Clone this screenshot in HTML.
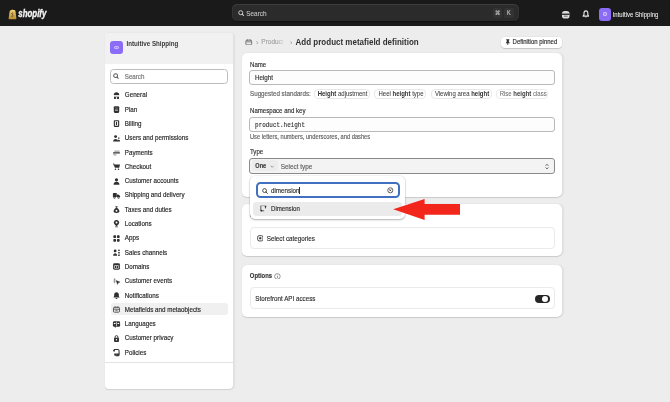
<!DOCTYPE html>
<html><head><meta charset="utf-8">
<style>
*{box-sizing:border-box;margin:0;padding:0}
html,body{width:670px;height:402px;overflow:hidden;background:#ededed;font-family:"Liberation Sans",sans-serif;color:#303030}
.t,.lbl,.chip{-webkit-text-stroke:0.14px currentColor}
.t,.lbl{transform:scaleY(1.14);transform-origin:0 50%}
.a{position:absolute}
.t{position:absolute;white-space:nowrap;line-height:1}
#top{position:absolute;left:0;top:0;width:670px;height:25.5px;background:#1a1a1a}
#side{position:absolute;left:104.8px;top:32.6px;width:128.6px;height:356.8px;background:#fff;border-radius:4px;box-shadow:0 0.5px 1px rgba(0,0,0,.12),1.2px 0 1.5px rgba(0,0,0,.05);overflow:hidden}
#sidehead{position:absolute;left:0;top:0;width:129px;height:31px;background:#f1f1f1}
.nav{position:absolute;left:20px;font-size:6.25px;color:#1f1f1f;line-height:1}
.ico{position:absolute;left:8.5px;width:6px;height:6px}
.card{position:absolute;left:241.8px;width:320.4px;background:#fff;border-radius:5px;box-shadow:0 0.6px 1px rgba(0,0,0,.14),1.5px 0 2px rgba(0,0,0,.05)}
.lbl{position:absolute;font-size:6.1px;line-height:1;color:#303030;white-space:nowrap}
.inp{position:absolute;left:7.6px;width:305.8px;height:14.6px;border:0.6px solid #b9b9b9;border-radius:3px;background:#fdfdfd}
.chip{position:absolute;top:36.8px;height:9.7px;border:0.6px solid #e8e8e8;border-radius:4px;background:#fff;font-size:6px;line-height:9.3px;padding-left:3px;white-space:nowrap;color:#404040;-webkit-text-stroke:0.05px currentColor}
.chip b{color:#303030;-webkit-text-stroke:0}
.ct{display:inline-block;transform:scaleY(1.14);transform-origin:0 50%}
.chip b{font-weight:700}
</style></head><body><div id="root" style="position:absolute;left:0;top:0;width:670px;height:402px;will-change:transform">

<!-- TOP BAR -->
<div id="top">
  <svg class="a" style="left:7.7px;top:8.5px" width="9" height="11" viewBox="0 0 9 11">
    <defs><linearGradient id="bg1" x1="0" y1="0" x2="0" y2="1"><stop offset="0" stop-color="#f0d27a"/><stop offset="1" stop-color="#b88a2e"/></linearGradient></defs>
    <path d="M1.6 2.6 Q2 1.2 3.2 1.1 Q4.2 0.2 5.2 1 L6.6 1.1 Q7.3 1.3 7.5 2.2 L8.4 9.4 Q8.4 10.2 7.6 10.2 L1.2 10.2 Q0.5 10.2 0.6 9.4 Z" fill="url(#bg1)"/>
    <path d="M5.3 4.2 Q4.5 3.7 3.8 4.2 Q3.3 4.9 4.3 5.5 Q5.4 6.1 4.9 7.1 Q4.3 7.8 3.3 7.2" fill="none" stroke="#5a4214" stroke-width="1" opacity=".8"/>
  </svg>
  <div class="t" style="left:18.3px;top:9.2px;font-size:7.9px;font-weight:700;font-style:italic;color:#f2f2f2;-webkit-text-stroke:0.3px #f2f2f2;transform:scale(1,1.38);transform-origin:0 0">shopify</div>
  <div class="a" style="left:232px;top:4px;width:286.5px;height:17px;border-radius:5.5px;background:#2b2b2b;box-shadow:inset 0 1px 0 #3c3c3c,inset 1px 0 0 #333,inset -1px 0 0 #333,0 1px 1px rgba(0,0,0,.35)"></div>
  <svg class="a" style="left:237.5px;top:9.5px" width="6.5" height="6.5" viewBox="0 0 10 10"><circle cx="4.2" cy="4.2" r="3.1" fill="none" stroke="#d0d0d0" stroke-width="1.5"/><path d="M6.5 6.5 L9 9" stroke="#d0d0d0" stroke-width="1.6" stroke-linecap="round"/></svg>
  <div class="t" style="left:246.3px;top:10.5px;font-size:6.4px;color:#bdbdbd">Search</div>
  <div class="a" style="left:493px;top:8px;width:8.5px;height:10px;border-radius:2px;background:#333"></div>
  <div class="t" style="left:494.6px;top:11.3px;font-size:5.5px;color:#c4c4c4">&#8984;</div>
  <div class="a" style="left:504px;top:8px;width:9.5px;height:10px;border-radius:2px;background:#333"></div>
  <div class="t" style="left:506.9px;top:11.4px;font-size:5.5px;color:#c4c4c4">K</div>
  <!-- db icon -->
  <svg class="a" style="left:560.8px;top:10.3px" width="9.5" height="9.5" viewBox="0 0 10 10"><rect x="1" y="1" width="8" height="8" rx="3" fill="#dcdcdc"/><rect x="1" y="3.8" width="8" height="1.3" fill="#1a1a1a"/><rect x="3" y="6" width="4" height="1" fill="#1a1a1a" opacity=".6"/></svg>
  <!-- bell -->
  <svg class="a" style="left:581.6px;top:10.4px" width="7.8" height="8.2" viewBox="0 0 10 11"><path d="M5 1.2 C3 1.2 2.4 2.8 2.4 4.6 L2.4 6.6 L1.2 8.2 L8.8 8.2 L7.6 6.6 L7.6 4.6 C7.6 2.8 7 1.2 5 1.2 Z" fill="none" stroke="#e6e6e6" stroke-width="1.5" stroke-linejoin="round"/><path d="M3.6 9.2 Q5 10.8 6.4 9.2 Z" fill="#e6e6e6"/></svg>
  <div class="a" style="left:598.7px;top:8px;width:12.5px;height:12.5px;border-radius:3px;background:#8b6cf6"></div>
  <div class="a" style="left:602.8px;top:12.4px;width:4.6px;height:3.6px;border:0.8px solid #c9b8ff;border-radius:1px;background:#a58cf9"></div>
  <div class="t" style="left:612.7px;top:11.8px;font-size:6.0px;color:#f0f0f0;-webkit-text-stroke:0.05px #f0f0f0">Intuitive Shipping</div>
</div>

<!-- SIDEBAR -->
<div id="side">
  <div id="sidehead"></div>
  <div class="a" style="left:5px;top:8.90px;width:13px;height:13px;border-radius:3px;background:#8b6cf6"></div>
  <div class="a" style="left:9.2px;top:13.00px;width:4.6px;height:3.8px;border:0.8px solid #c9b8ff;border-radius:1px;background:#a58cf9"></div>
  <div class="t" style="left:21.7px;top:8.50px;font-size:6.2px;font-weight:700;color:#3a3a3a;-webkit-text-stroke:0">Intuitive Shipping</div>
  <div class="a" style="left:5px;top:36.40px;width:118px;height:14.7px;border:0.7px solid #bcbcbc;border-radius:3.5px;background:#fff"></div>
  <svg class="a" style="left:8.4px;top:40.50px" width="6" height="6" viewBox="0 0 10 10"><circle cx="4.4" cy="4.4" r="3.2" fill="none" stroke="#5a5a5a" stroke-width="1.7"/><path d="M6.8 6.8 L8.8 8.8" stroke="#5a5a5a" stroke-width="1.8" stroke-linecap="round"/></svg>
  <div class="t" style="left:20px;top:41.20px;font-size:6.2px;color:#717171">Search</div>
  <!-- highlight -->
  <div class="a" style="left:5.8px;top:270.6px;width:117px;height:12px;border-radius:3px;background:#f0f0f0"></div>
  <div id="navlist"></div>
  <svg class="a" style="left:7.2px;top:58.15px" width="9" height="9" viewBox="0 0 20 20"><path d="M10 2.5c-3.5 0-5.8 2-6 5.2v1.2h12V7.7c-.2-3.2-2.5-5.2-6-5.2z" fill="#303030"/><rect x="4" y="10.2" width="12" height="1.6" fill="#303030" opacity=".35"/><path d="M4.5 12.5h11v5h-11z" fill="#303030"/><rect x="8.6" y="13.8" width="2.8" height="3.7" fill="#fff"/></svg>
  <div class="t nav" style="top:59.80px">General</div>
  <svg class="a" style="left:7.2px;top:72.45px" width="9" height="9" viewBox="0 0 20 20"><rect x="4" y="2.5" width="12" height="15" rx="2.5" fill="#303030"/><rect x="6.8" y="10.5" width="6.4" height="1.8" fill="#fff"/><rect x="6.8" y="5.5" width="6.4" height="3" fill="#fff" opacity=".25"/></svg>
  <div class="t nav" style="top:74.10px">Plan</div>
  <svg class="a" style="left:7.2px;top:86.75px" width="9" height="9" viewBox="0 0 20 20"><rect x="4" y="2.5" width="12" height="15" rx="1.8" fill="#303030"/><rect x="6.5" y="5" width="7" height="10" fill="#fff"/><rect x="8.7" y="6.3" width="2.6" height="7.4" fill="#303030"/></svg>
  <div class="t nav" style="top:88.40px">Billing</div>
  <svg class="a" style="left:7.2px;top:101.05px" width="9" height="9" viewBox="0 0 20 20"><circle cx="8" cy="5.8" r="3.2" fill="#303030"/><path d="M2.5 16.5c0-3.6 2.2-5.5 5.5-5.5s5.5 1.9 5.5 5.5z" fill="#303030"/><circle cx="15" cy="9" r="2" fill="#303030" opacity=".75"/><path d="M12.5 16.5c0-2.6 1-4 2.5-4s3 1.4 3 4z" fill="#303030"/></svg>
  <div class="t nav" style="top:102.70px">Users and permissions</div>
  <svg class="a" style="left:7.2px;top:115.35px" width="9" height="9" viewBox="0 0 20 20"><path d="M6 7h10" stroke="#303030" stroke-width="2.2" stroke-linecap="round" opacity=".55"/><path d="M3.5 11h13" stroke="#303030" stroke-width="2.6" stroke-linecap="round"/><path d="M3.5 14.5c1.5 1.2 3.5 1.5 5.5 1" stroke="#303030" stroke-width="1.8" stroke-linecap="round" fill="none" opacity=".7"/></svg>
  <div class="t nav" style="top:117.00px">Payments</div>
  <svg class="a" style="left:7.2px;top:129.65px" width="9" height="9" viewBox="0 0 20 20"><path d="M2 3.5h2.6l.8 2h12.4l-1.8 7.5H6.6z" fill="#303030"/><circle cx="7.6" cy="16" r="1.7" fill="#303030"/><circle cx="14.4" cy="16" r="1.7" fill="#303030"/></svg>
  <div class="t nav" style="top:131.30px">Checkout</div>
  <svg class="a" style="left:7.2px;top:143.95px" width="9" height="9" viewBox="0 0 20 20"><circle cx="10" cy="6.3" r="3.6" fill="#303030"/><path d="M3.5 17c0-4.2 2.8-6.3 6.5-6.3s6.5 2.1 6.5 6.3z" fill="#303030"/></svg>
  <div class="t nav" style="top:145.60px">Customer accounts</div>
  <svg class="a" style="left:7.2px;top:158.25px" width="9" height="9" viewBox="0 0 20 20"><path d="M2 6.5c0-1 .8-2 2-2h6.5v9H2z" fill="#303030"/><path d="M10.5 7.5h3.8l3.7 3.6V13.5h-7.5z" fill="#303030"/><circle cx="5.5" cy="14.5" r="2.5" fill="#303030"/><circle cx="14.5" cy="14.5" r="2.5" fill="#303030"/><circle cx="5.5" cy="14.5" r="1" fill="#fff"/><circle cx="14.5" cy="14.5" r="1" fill="#fff"/></svg>
  <div class="t nav" style="top:159.90px">Shipping and delivery</div>
  <svg class="a" style="left:7.2px;top:172.55px" width="9" height="9" viewBox="0 0 20 20"><path d="M7.2 2.5h5.6L11.4 6H8.6z" fill="#303030"/><path d="M8.3 6.5h3.4c2.8 1.8 4.8 4.6 4.8 7.4 0 2.6-2 3.6-6.5 3.6s-6.5-1-6.5-3.6c0-2.8 2-5.6 4.8-7.4z" fill="#303030"/><circle cx="10" cy="12.8" r="2.1" fill="#fff"/></svg>
  <div class="t nav" style="top:174.20px">Taxes and duties</div>
  <svg class="a" style="left:7.2px;top:186.85px" width="9" height="9" viewBox="0 0 20 20"><path d="M10 2c-3.6 0-6 2.6-6 6 0 3.4 3.5 6.3 6 8 2.5-1.7 6-4.6 6-8 0-3.4-2.4-6-6-6z" fill="#303030"/><circle cx="10" cy="8" r="2.2" fill="#fff"/><rect x="6.5" y="16.5" width="7" height="1.8" rx=".9" fill="#303030"/></svg>
  <div class="t nav" style="top:188.50px">Locations</div>
  <svg class="a" style="left:7.2px;top:201.15px" width="9" height="9" viewBox="0 0 20 20"><rect x="3" y="3" width="6" height="6" rx="1.6" fill="#303030"/><rect x="11" y="3" width="6" height="6" rx="1.6" fill="#303030"/><rect x="3" y="11" width="6" height="6" rx="1.6" fill="#303030"/><rect x="11" y="11" width="6" height="6" rx="1.6" fill="#303030"/></svg>
  <div class="t nav" style="top:202.80px">Apps</div>
  <svg class="a" style="left:7.2px;top:215.45px" width="9" height="9" viewBox="0 0 20 20"><circle cx="7" cy="6.5" r="3.2" fill="#303030"/><path d="M2.5 17c0-3.5 2-5.6 4.5-5.6s4.5 2.1 4.5 5.6z" fill="#303030"/><circle cx="15.5" cy="5" r="1.9" fill="#303030"/><circle cx="15.5" cy="10.5" r="1.9" fill="#303030"/><circle cx="15.5" cy="16" r="1.9" fill="#303030"/></svg>
  <div class="t nav" style="top:217.10px">Sales channels</div>
  <svg class="a" style="left:7.2px;top:229.75px" width="9" height="9" viewBox="0 0 20 20"><rect x="2.5" y="3" width="15" height="14" rx="3" fill="#303030"/><rect x="5" y="7.5" width="10" height="7" fill="#fff"/><rect x="6.3" y="9" width="3.2" height="4.5" fill="#303030"/><rect x="10.6" y="9" width="3.2" height="4.5" fill="#303030"/></svg>
  <div class="t nav" style="top:231.40px">Domains</div>
  <svg class="a" style="left:7.2px;top:244.05px" width="9" height="9" viewBox="0 0 20 20"><path d="M5.8 2.5V14" stroke="#303030" stroke-width="1.6" opacity=".6"/><path d="M2.5 6.5H9M2.5 10.5H8" stroke="#303030" stroke-width="1.4" opacity=".45"/><path d="M9.3 8l8.2 3.2-3.6 1.5-1.6 3.8z" fill="#303030" stroke="#303030" stroke-width="1" stroke-linejoin="round"/></svg>
  <div class="t nav" style="top:245.70px">Customer events</div>
  <svg class="a" style="left:7.2px;top:258.35px" width="9" height="9" viewBox="0 0 20 20"><path d="M10 2.5c-3.2 0-5.2 2.3-5.2 5.5v3.5L3 14.5h14l-1.8-3V8c0-3.2-2-5.5-5.2-5.5z" fill="#303030"/><path d="M7.8 15.5a2.2 2.2 0 0 0 4.4 0z" fill="#303030"/></svg>
  <div class="t nav" style="top:260.00px">Notifications</div>
  <svg class="a" style="left:7.2px;top:272.65px" width="9" height="9" viewBox="0 0 20 20"><rect x="3.3" y="5" width="13.4" height="11" rx="2.3" fill="none" stroke="#303030" stroke-width="1.7"/><path d="M3.5 9.3h13M7 3v3M13 3v3" stroke="#303030" stroke-width="1.7"/><path d="M7.5 12.5h5" stroke="#303030" stroke-width="1.5"/></svg>
  <div class="t nav" style="top:274.30px">Metafields and metaobjects</div>
  <svg class="a" style="left:7.2px;top:286.95px" width="9" height="9" viewBox="0 0 20 20"><rect x="2" y="3" width="16" height="12" rx="3" fill="#303030"/><path d="M6.5 14.5v3.5l3.5-3.5" fill="#303030"/><rect x="9.3" y="4" width="1.4" height="10" fill="#fff"/><rect x="4" y="6.5" width="3.8" height="2.5" fill="#fff"/><rect x="12.2" y="6.5" width="3.8" height="2.5" fill="#fff"/></svg>
  <div class="t nav" style="top:288.60px">Languages</div>
  <svg class="a" style="left:7.2px;top:301.25px" width="9" height="9" viewBox="0 0 20 20"><path d="M6.8 9V6.8a3.2 3.2 0 0 1 6.4 0V9" fill="none" stroke="#303030" stroke-width="2"/><rect x="4.5" y="8.5" width="11" height="9" rx="2" fill="#303030"/><circle cx="10" cy="12.8" r="1.7" fill="#fff"/></svg>
  <div class="t nav" style="top:302.90px">Customer privacy</div>
  <svg class="a" style="left:7.2px;top:315.55px" width="9" height="9" viewBox="0 0 20 20"><path d="M4.5 3.5h8.5c1.7 0 2.7 1 2.7 2.7V15c0 1.2-1 2.2-2.2 2.2H8.5" fill="none" stroke="#303030" stroke-width="2.3"/><path d="M4.5 3.5c-1.3 0-2 .9-2 2.2s.7 2.3 2 2.3H6.5V5.6c0-1.2-.8-2.1-2-2.1zM17 12h-7.5v3c0 1.2-.8 2.2-2 2.2h6" fill="#303030"/><path d="M9.5 12v3c0 1.3-.9 2.3-2.3 2.3S5 16.3 5 15v-3z" fill="#303030"/></svg>
  <div class="t nav" style="top:317.20px">Policies</div>
<!--endnavitems-->
  <div class="a" style="left:0;top:329.3px;width:129px;height:0.6px;background:#e3e3e3"></div>
</div>

<!-- MAIN -->
<svg class="a" style="left:245px;top:38.5px" width="7.5" height="6.5" viewBox="0 0 10 9"><rect x="1" y="1.6" width="8" height="6.6" rx="1.5" fill="none" stroke="#616161" stroke-width="1.2"/><path d="M3 0.5 V2.5 M7 0.5 V2.5 M1.5 4 H8.5" stroke="#616161" stroke-width="1.1"/></svg>
<svg class="a" style="left:256px;top:40.8px" width="2.5" height="3.6" viewBox="0 0 2.5 3.6"><path d="M0.5 0.4 L1.8 1.8 L0.5 3.2" fill="none" stroke="#8a8a8a" stroke-width="0.75"/></svg>
<div class="t" style="left:261.3px;top:39.4px;font-size:6.5px;color:#a3a3a3">Produ<span style="color:#bdbdbd">c</span><span style="color:#dedede">t</span></div>
<svg class="a" style="left:289.7px;top:40.8px" width="2.5" height="3.6" viewBox="0 0 2.5 3.6"><path d="M0.5 0.4 L1.8 1.8 L0.5 3.2" fill="none" stroke="#8a8a8a" stroke-width="0.75"/></svg>
<div class="t" style="left:295.6px;top:39.1px;font-size:8px;font-weight:700;color:#303030;-webkit-text-stroke:0">Add product metafield definition</div>

<div class="a" style="left:501.2px;top:36.8px;width:60.6px;height:10.8px;background:#fff;border-radius:4px;box-shadow:0 0.8px 1px rgba(0,0,0,.2),0 0 0 0.4px rgba(0,0,0,.06)"></div>
<svg class="a" style="left:505.2px;top:38.6px" width="5.6" height="6.5" viewBox="0 0 8 10"><path d="M1.6 0.5 H6.4 V1.8 L5.6 2 V4.2 L7.4 6.4 H0.6 L2.4 4.2 V2 L1.6 1.8 Z" fill="#303030"/><rect x="3.4" y="6" width="1.2" height="3.6" fill="#303030"/></svg>
<div class="t" style="left:512.6px;top:39.4px;font-size:6px;color:#303030">Definition pinned</div>

<!-- CARD 1 -->
<div class="card" style="top:52.7px;height:144.8px">
  <div class="lbl" style="left:8.20px;top:9.2px">Name</div>
  <div class="inp" style="top:17.4px"></div>
  <div class="lbl" style="left:13.20px;top:22.6px;font-size:6.25px">Height</div>
  <div class="lbl" style="left:8.20px;top:38.3px;font-size:6.25px;color:#616161">Suggested standards:</div>
  <div class="chip" style="left:71.90px;width:56.3px"><span class="ct"><b>Height</b> adjustment</span></div>
  <div class="chip" style="left:132.70px;width:52px"><span class="ct">Heel <b>height</b> type</span></div>
  <div class="chip" style="left:189.10px;width:60.7px"><span class="ct">Viewing area <b>height</b></span></div>
  <div class="chip" style="left:253.90px;width:52px;color:#6e6e6e;border-color:#ebebeb"><span class="ct">Rise <b style="color:#3a3a3a">height</b> class</span></div>
  <div class="lbl" style="left:8.20px;top:55.5px">Namespace and key</div>
  <div class="inp" style="top:64.8px"></div>
  <div class="lbl" style="left:13.30px;top:70.4px;font-family:'Liberation Mono';font-size:5.95px;-webkit-text-stroke:0.12px currentColor;color:#303030">product.height</div>
  <div class="lbl" style="left:8.20px;top:82.3px;font-size:5.72px;color:#616161">Use letters, numbers, underscores, and dashes</div>
  <div class="lbl" style="left:8.20px;top:96.8px">Type</div>
  <div class="a" style="left:7.40px;top:105.3px;width:306px;height:15.6px;border:0.7px solid #8a8a8a;border-radius:3px;background:#f3f3f3"></div>
  <div class="a" style="left:10.2px;top:107.6px;width:26px;height:11px;border-radius:2.5px;background:#ececec"></div>
  <div class="lbl" style="left:13.50px;top:111.3px;font-size:5.6px;font-weight:700;color:#3a3a3a;-webkit-text-stroke:0.15px currentColor">One</div>
  <svg class="a" style="left:28.00px;top:112.3px" width="4.5" height="3" viewBox="0 0 6 4"><path d="M1 1 L3 3 L5 1" fill="none" stroke="#616161" stroke-width="0.8"/></svg>
  <div class="lbl" style="left:38.90px;top:111px;font-size:6.4px;color:#616161">Select type</div>
  <svg class="a" style="left:302.90px;top:110px" width="4" height="7" viewBox="0 0 4 7"><path d="M0.7 2.7 L2 1.3 L3.3 2.7 M0.7 4.5 L2 5.9 L3.3 4.5" fill="none" stroke="#4a4a4a" stroke-width="0.9"/></svg>
</div>

<!-- CARD 2 -->
<div class="card" style="top:204.3px;height:52px">
  <div class="lbl" style="left:8.00px;top:9.2px;font-size:5.9px;font-weight:700;color:#333;-webkit-text-stroke:0.12px currentColor">Categories</div>
  <div class="a" style="left:8.20px;top:23.2px;width:305px;height:21.5px;border:0.6px solid #eaeaea;border-radius:4px"></div>
  <svg class="a" style="left:15.00px;top:31.2px" width="6.6" height="6.6" viewBox="0 0 10 10"><rect x="1" y="1" width="8" height="8" rx="2.2" fill="none" stroke="#303030" stroke-width="1.3"/><rect x="3.4" y="3.4" width="3.2" height="3.2" rx="0.5" fill="#303030"/></svg>
  <div class="lbl" style="left:24.90px;top:31.8px;font-size:6.3px">Select categories</div>
</div>

<!-- CARD 3 -->
<div class="card" style="top:264.8px;height:52.2px">
  <div class="lbl" style="left:8.00px;top:9.2px;font-size:5.9px;font-weight:700;color:#333;-webkit-text-stroke:0.12px currentColor">Options</div>
  <svg class="a" style="left:32.30px;top:7.9px" width="6.8" height="6.8" viewBox="0 0 10 10"><circle cx="5" cy="5" r="4.1" fill="none" stroke="#6b6b6b" stroke-width="1"/><path d="M5 4.4 V7.4" stroke="#6b6b6b" stroke-width="1"/><circle cx="5" cy="2.9" r="0.6" fill="#6b6b6b"/></svg>
  <div class="a" style="left:8.20px;top:22.7px;width:305px;height:21.6px;border:0.6px solid #eaeaea;border-radius:4px"></div>
  <div class="lbl" style="left:13.50px;top:30.8px;font-size:6.25px">Storefront API access</div>
  <div class="a" style="left:293.1px;top:30.1px;width:15.1px;height:8px;border-radius:4px;background:#262626"></div>
  <div class="a" style="left:300.0px;top:31.2px;width:6.2px;height:5.6px;border-radius:3px;background:#fff"></div>
</div>

<!-- POPOVER -->
<div class="a" style="left:249.8px;top:176.2px;width:155.6px;height:42.8px;background:#fff;border-radius:5px;box-shadow:0 1px 2px rgba(0,0,0,.28),0 0 0 0.6px rgba(0,0,0,.08)"></div>
<div class="a" style="left:255.6px;top:182.3px;width:144.6px;height:16.2px;border:2px solid #4170c0;border-radius:4.5px;background:#fff"></div>
<svg class="a" style="left:261.6px;top:187.8px" width="6" height="6" viewBox="0 0 10 10"><circle cx="4.3" cy="4.3" r="3.2" fill="none" stroke="#303030" stroke-width="1.4"/><path d="M6.6 6.6 L9 9" stroke="#303030" stroke-width="1.5" stroke-linecap="round"/></svg>
<div class="t" style="left:271px;top:187.9px;font-size:6.25px;color:#303030">dimension</div>
<div class="a" style="left:298.9px;top:187.2px;width:0.7px;height:7.2px;background:#303030"></div>
<svg class="a" style="left:387.3px;top:187.2px" width="6.6" height="6.6" viewBox="0 0 10 10"><circle cx="5" cy="5" r="3.9" fill="none" stroke="#4a4a4a" stroke-width="1.3"/><path d="M3.5 3.5 L6.5 6.5 M6.5 3.5 L3.5 6.5" stroke="#4a4a4a" stroke-width="1.3"/></svg>
<div class="a" style="left:253.4px;top:201.9px;width:148.6px;height:14px;border-radius:3.5px;background:#ebebeb"></div>
<svg class="a" style="left:259.9px;top:205.2px" width="7" height="7" viewBox="0 0 10 10"><path d="M1 1 H6.5" stroke="#303030" stroke-width="1" opacity=".45"/><path d="M1.2 1.2 V8.3 H6" fill="none" stroke="#303030" stroke-width="1.1"/><circle cx="2" cy="8" r="1.3" fill="#303030"/><path d="M6.3 1.2 H9.2 L8 5.6 Z" fill="#303030"/></svg>
<div class="t" style="left:271px;top:205.9px;font-size:6.1px;color:#303030">Dimension</div>

<!-- RED ARROW -->
<svg class="a" style="left:390px;top:196px" width="75" height="27" viewBox="390 196 75 27">
  <path d="M393.2 209.2 L424.6 198.9 L424.6 204.1 L460 204.1 L460 214.8 L424.6 214.8 L424.6 219.9 Z" fill="#f3261b"/>
</svg>

</div></body></html>
